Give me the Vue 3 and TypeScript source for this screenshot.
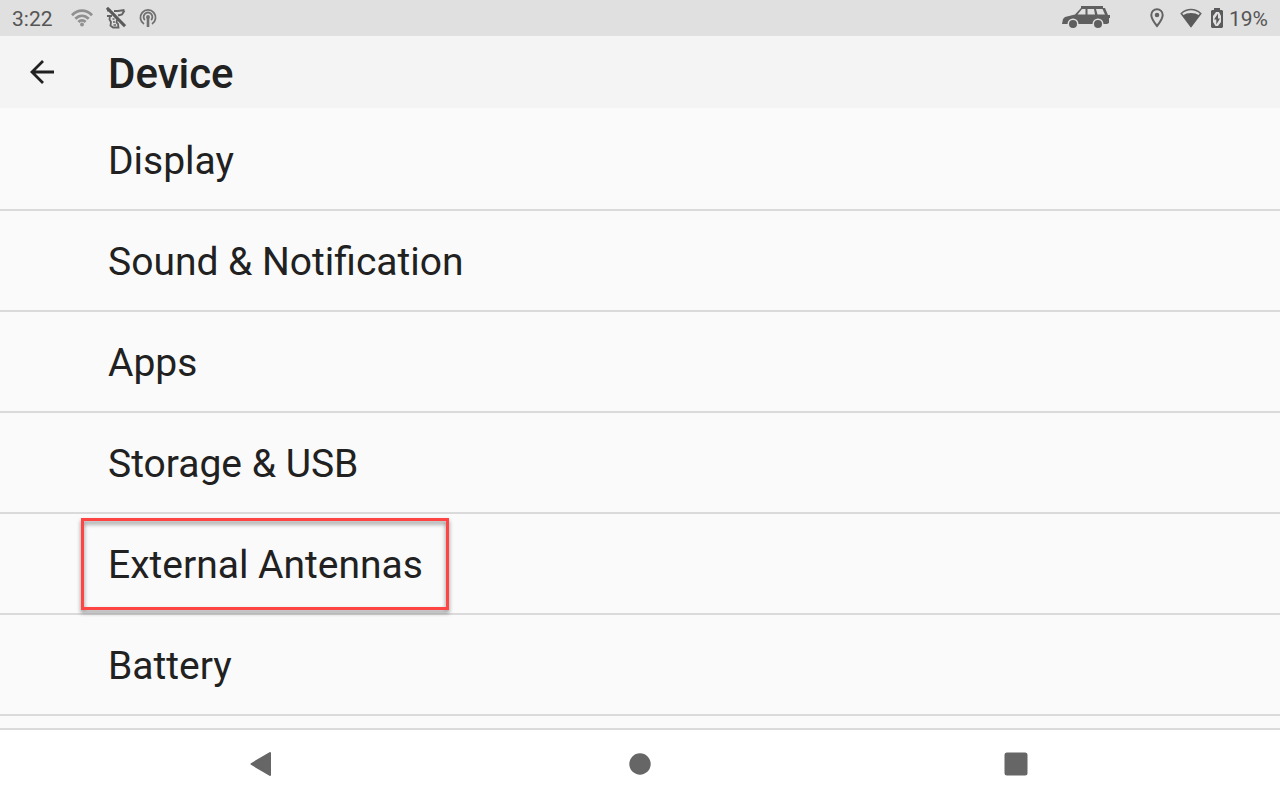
<script setup lang="ts">
interface SettingItem {
  label: string
  highlighted?: boolean
}

const time = '3:22'
const battery = '19%'

const items: SettingItem[] = [
  { label: 'Display' },
  { label: 'Sound & Notification' },
  { label: 'Apps' },
  { label: 'Storage & USB' },
  { label: 'External Antennas', highlighted: true },
  { label: 'Battery' },
]
</script>

<template>
  <div class="screen">
    <div class="status">
      <div class="group left">
        <span class="time">{{ time }}</span>
        <svg class="faded" width="22" height="18" viewBox="0 0 22 18" fill="none" stroke="#909090" stroke-width="2.8">
          <path d="M1 6.2C7 .2 15 .2 21 6.2" />
          <path d="M4.3 9.8C8.4 5.8 13.6 5.8 17.7 9.8" />
          <path d="M7.4 13C9.5 10.9 12.5 10.9 14.6 13" />
          <circle cx="11" cy="15.5" r="2" fill="#909090" stroke="none" />
        </svg>
        <svg width="20" height="22" viewBox="0 0 20 22" fill="none" stroke="#636363">
          <path d="M1 3.5H5M8 4H12L18.5 3M18.5 3.5L16 7.5L12 8.5M5 5L9 8.5" stroke-width="2" />
          <path d="M1 9H6M4 8.5L3.5 12.5L5 15L4.5 18.5L7 20.5H12.5L12 17L10.5 15.5L11 12.5" stroke-width="1.8" />
          <path d="M6.5 12H8.5M7 15H9M7.5 18H10" stroke-width="1.4" />
          <path d="M1 .8L19 19.2" stroke="#5a5a5a" stroke-width="3" />
        </svg>
        <svg width="18" height="20" viewBox="0 0 18 20" fill="none" stroke="#707070" stroke-width="1.8">
          <path d="M5 16A7.6 7.6 0 1 1 13 16" />
          <path d="M5.9 12A4.4 4.4 0 1 1 12.1 12" />
          <circle cx="9" cy="9" r="1.9" fill="#707070" stroke="none" />
          <path d="M9 9V19" stroke-width="2.6" />
        </svg>
      </div>
      <div class="group right">
        <svg class="car" width="48" height="24" viewBox="0 0 48 24">
          <path fill="#5f5f5f" fill-rule="evenodd" d="M19 0H41V2H43L46 9H48V12H47V17L45 18H41.5A5.5 5.5 0 0 0 30.5 18H16.5A5.5 5.5 0 0 0 5.5 18H0L1 13L3 11L13 8.5L19 2ZM20 3L15.5 8.5H23.5V3ZM25.5 3V8.5H33L32 3ZM34 3L35.5 8.5H43L40.5 3Z" />
          <circle cx="11" cy="18" r="4" fill="#5f5f5f" />
          <circle cx="36" cy="18" r="4" fill="#5f5f5f" />
        </svg>
        <svg class="pin" width="14" height="20" viewBox="0 0 14 20">
          <path d="M7 1.2A5.7 5.7 0 0 0 1.3 7C1.3 11 7 18 7 18S12.7 11 12.7 7A5.7 5.7 0 0 0 7 1.2Z" fill="none" stroke="#636363" stroke-width="2" />
          <circle cx="7" cy="7" r="2.3" fill="#636363" />
        </svg>
        <svg class="signal" width="22" height="20" viewBox="0 0 22 20">
          <path d="M11 18.5L1.3 5.5C7 .2 15 .2 20.7 5.5Z" fill="none" stroke="#636363" stroke-width="1.6" />
          <path d="M11 19L2.500 7.5C7.6 4.200 14.4 4.200 19.5 7.5Z" fill="#5a5a5a" />
        </svg>
        <svg class="battery" width="12" height="20" viewBox="0 0 12 20">
          <path fill="#5a5a5a" fill-rule="evenodd" d="M3 0H9V2H11L12 3V19L11 20H1L0 19V3L1 2H3ZM5 4L2 8V14L4.5 18H7L10 14V8L8 4Z" />
          <path d="M7 5.5L3 11.5H5.300V16.5L9 10.500H7Z" fill="#5a5a5a" />
        </svg>
        <span>{{ battery }}</span>
      </div>
    </div>

    <header class="header">
      <button class="back" type="button" aria-label="Back">
        <svg width="26" height="26" viewBox="0 0 26 26" fill="none" stroke="#212121" stroke-width="2.8">
          <path d="M25 13H3M14 2L3 13L14 24" />
        </svg>
      </button>
      <h1>Device</h1>
    </header>

    <main class="content">
      <ul>
        <li v-for="item in items" :key="item.label">
          <a href="#">
            <span :class="{ marked: item.highlighted }">{{ item.label }}</span>
          </a>
        </li>
      </ul>
    </main>

    <nav class="navbar">
      <button type="button" aria-label="Back">
        <svg width="28" height="26" viewBox="0 0 28 26">
          <path d="M1.5 13L20 2V24Z" fill="#666" stroke="#666" stroke-width="2" stroke-linejoin="round" />
        </svg>
      </button>
      <button type="button" aria-label="Home">
        <svg width="22" height="22" viewBox="0 0 22 22"><circle cx="11" cy="11" r="10.7" fill="#666" /></svg>
      </button>
      <button type="button" aria-label="Recent apps">
        <svg width="24" height="24" viewBox="0 0 24 24"><rect x=".5" y=".5" width="23" height="23" rx="2.5" fill="#666" /></svg>
      </button>
    </nav>
  </div>
</template>

<style>
body {
  margin: 0;
}
</style>

<style scoped>
.screen {
  display: flex;
  flex-direction: column;
  min-height: 100vh;
  background: #fafafa;
  color: #212121;
  font-family: Roboto, "Liberation Sans", sans-serif;
}

svg {
  display: block;
  flex: none;
}

button {
  display: flex;
  align-items: center;
  justify-content: center;
  padding: 0;
  border: 0;
  background: none;
  cursor: pointer;
}

.status {
  display: flex;
  align-items: center;
  justify-content: space-between;
  box-sizing: border-box;
  height: 36px;
  padding: 0 12px;
  background: #e0e0e0;
  color: #555;
  font-size: 21px;
  line-height: 24px;
}

.status span {
  padding-top: 2px;
}

.group {
  display: flex;
  align-items: center;
}

.left {
  gap: 13px;
}

.faded {
  margin-left: 5px;
}

.car {
  margin-right: 40px;
}

.pin {
  margin-right: 16px;
}

.signal {
  margin-right: 9px;
}

.battery {
  margin-right: 6px;
}

.header {
  display: flex;
  align-items: center;
  height: 72px;
  background: #f4f4f4;
}

.back {
  width: 84px;
  height: 72px;
  margin-right: 24px;
}

h1 {
  margin: 0;
  padding-top: 4px;
  font-size: 42px;
  font-weight: 500;
  line-height: 56px;
}

.content {
  flex: 1;
  padding-bottom: 12px;
}

ul {
  margin: 0;
  padding: 0;
  list-style: none;
  border-bottom: 2px solid #dadada;
}

li {
  border-top: 2px solid #dadada;
}

li:first-child {
  border-top-color: transparent;
}

a {
  display: flex;
  align-items: center;
  box-sizing: border-box;
  height: 99px;
  padding: 2px 108px 0;
  color: inherit;
  font-size: 39px;
  line-height: 56px;
  text-decoration: none;
}

.marked {
  position: relative;
}

.marked::after {
  content: "";
  position: absolute;
  inset: -19px -26px -17px -27px;
  border: 3px solid #ff4444;
  filter: drop-shadow(0 3px 2px rgba(0, 0, 0, 0.45));
  pointer-events: none;
}

.navbar {
  display: grid;
  grid-template-columns: repeat(3, 1fr);
  height: 68px;
  padding: 0 76px 2px;
  border-top: 2px solid #dadada;
  background: #fff;
}
</style>
